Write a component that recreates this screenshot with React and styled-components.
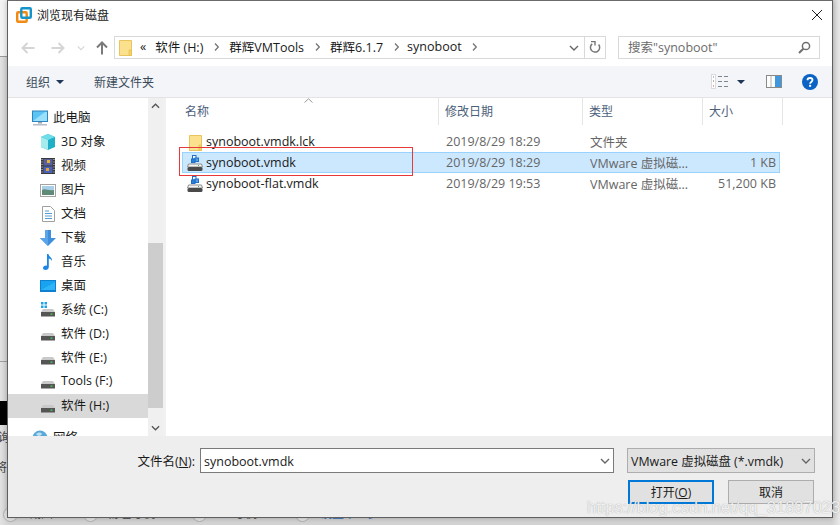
import React from "react";
import styled, { createGlobalStyle } from "styled-components";

const GlobalStyle = createGlobalStyle`
  html, body {
    margin: 0;
    padding: 0;
    width: 840px;
    height: 525px;
    overflow: hidden;
    background: #e6e6e6;
    font-family: "Open Sans", "Noto Sans CJK SC", sans-serif;
    font-size: 12px;
    color: #1a1a1a;
  }
`;

const Desktop = styled.div`
  position: relative;
  width: 840px;
  height: 525px;
  overflow: hidden;
  background: linear-gradient(90deg, #e2e2e2 0, #d4d4d4 8px, #d4d4d4 832px, #e9e9e9 840px);
`;

const BehindLine = styled.div`
  position: absolute;
  left: 0;
  top: ${(p) => p.$top}px;
  width: 8px;
  height: ${(p) => p.$h}px;
  background: ${(p) => p.$bg};
`;

const BehindText = styled.div`
  position: absolute;
  left: ${(p) => p.$left}px;
  top: ${(p) => p.$top}px;
  white-space: nowrap;
  font-size: 12px;
  line-height: 16px;
  color: ${(p) => p.$color || "#444"};
`;

const BehindRadio = styled.div`
  position: absolute;
  left: ${(p) => p.$left}px;
  top: 507px;
  width: 13px;
  height: 13px;
  border-radius: 50%;
  border: 1px solid #b0b0b0;
  background: #e6e6e6;
`;

const Dialog = styled.div`
  position: relative;
  box-sizing: border-box;
  margin-left: 7px;
  width: 826px;
  height: 518px;
  display: flex;
  flex-direction: column;
  background: #fff;
  border: 1px solid #5f5f5f;
  border-top-color: #6a6a6a;
  box-shadow: 0 0 6px rgba(0, 0, 0, 0.25);
`;

const TitleBar = styled.div`
  height: 29px;
  box-sizing: border-box;
  display: flex;
  align-items: center;
  padding: 0 9px 1px 8px;
  flex-shrink: 0;
`;

const TitleText = styled.span`
  margin-left: 5px;
  font-size: 12px;
  flex: 1;
`;

const NavBar = styled.div`
  height: 36px;
  display: flex;
  align-items: center;
  flex-shrink: 0;
  padding-bottom: 1px;
  box-sizing: border-box;
`;

const NavButtons = styled.div`
  width: 106px;
  display: flex;
  align-items: center;
  padding-left: 13px;
  box-sizing: border-box;
`;

const NavSlot = styled.span`
  display: flex;
  width: ${(p) => p.$w}px;
`;

const AddressBox = styled.div`
  box-sizing: border-box;
  width: 492px;
  height: 23px;
  border: 1px solid #d9d9d9;
  display: flex;
  align-items: center;
  padding-left: 4px;
`;

const Crumbs = styled.div`
  flex: 1;
  display: flex;
  align-items: center;
  font-size: 12.5px;
`;

const Crumb = styled.span`
  display: flex;
  align-items: center;
  margin-left: ${(p) => p.$ml}px;
  margin-bottom: 2px;
`;

const AddressEnd = styled.div`
  width: 20px;
  height: 100%;
  display: flex;
  align-items: center;
  justify-content: center;
`;

const AddressRefresh = styled(AddressEnd)`
  border-left: 1px solid #d9d9d9;
`;

const SearchBox = styled.div`
  box-sizing: border-box;
  margin-left: 12px;
  width: 202px;
  height: 23px;
  border: 1px solid #d9d9d9;
  display: flex;
  align-items: center;
  justify-content: space-between;
  padding: 0 8px 0 9px;
  color: #6d6d6d;
  font-size: 12.5px;
`;

const SearchHint = styled.span`
  margin-bottom: 2px;
`;

const Toolbar = styled.div`
  height: 32px;
  box-sizing: border-box;
  flex-shrink: 0;
  display: flex;
  align-items: center;
  padding: 0 14px 0 18px;
  background: #f3f5f8;
  border-bottom: 1px solid #e3e3e3;
  color: #3a4a5a;
  white-space: nowrap;
`;

const ToolItem = styled.span`
  display: flex;
  align-items: center;
  margin-right: ${(p) => p.$mr || 0}px;
  margin-left: ${(p) => p.$ml || 0}px;
`;

const ToolGroup = styled.div`
  margin-left: auto;
  display: flex;
  align-items: center;
`;

const Triangle = styled.i`
  display: block;
  width: 0;
  height: 0;
  margin-left: ${(p) => p.$ml}px;
  border-left: 4px solid transparent;
  border-right: 4px solid transparent;
  border-top: 4px solid #1f3656;
`;

const Body = styled.div`
  flex: 1;
  min-height: 0;
  display: flex;
  background: #fff;
`;

const Sidebar = styled.div`
  width: 140px;
  flex-shrink: 0;
  overflow: hidden;
  padding-top: 8px;
  box-sizing: border-box;
`;

const NavRow = styled.div`
  height: 24px;
  display: flex;
  align-items: center;
  margin-top: ${(p) => (p.$gap ? 8 : 0)}px;
  padding-left: ${(p) => (p.$root ? 24 : 32)}px;
  background: ${(p) => (p.$active ? "#d9d9d9" : "transparent")};
  font-size: 12.5px;
`;

const IconSlot = styled.span`
  width: 16px;
  height: 16px;
  margin-right: ${(p) => p.$mr}px;
  flex-shrink: 0;
  display: flex;
  align-items: center;
  justify-content: center;
`;

const NavLabel = styled.span`
  margin-bottom: 4px;
`;

const Scrollbar = styled.div`
  width: 15px;
  flex-shrink: 0;
  background: #f0f0f0;
  display: flex;
  flex-direction: column;
`;

const ScrollArrow = styled.div`
  height: 17px;
  display: flex;
  align-items: center;
  justify-content: center;
  transform: ${(p) => (p.$up ? "rotate(180deg)" : "none")};
`;

const ScrollTrack = styled.div`
  flex: 1;
  padding-top: 128px;
  padding-bottom: 11px;
  display: flex;
`;

const ScrollThumb = styled.div`
  flex: 1;
  background: #cdcdcd;
`;

const ListPane = styled.div`
  flex: 1;
  border-left: 3px solid #f1f1f1;
  min-width: 0;
`;

const HeaderRow = styled.div`
  position: relative;
  display: grid;
  grid-template-columns: 273px 144px 120px 80px;
  height: 27px;
  color: #4c607a;
`;

const HeaderCell = styled.div`
  display: flex;
  align-items: center;
  padding-left: ${(p) => p.$pl}px;
  padding-bottom: 1px;
  box-sizing: border-box;
  border-right: 1px solid #e5e5e5;
  font-size: 12px;
`;

const SortCaret = styled.svg`
  position: absolute;
  left: 138px;
  top: 0;
`;

const FileList = styled.div`
  padding: 6px 0 0 16px;
`;

const FileRow = styled.div`
  position: relative;
  box-sizing: border-box;
  display: grid;
  grid-template-columns: 257px 144px 120px 72px;
  width: 598px;
  height: 21px;
  align-items: center;
  color: #666;
  font-size: 12.5px;
  background: ${(p) => (p.$selected ? "#cce8ff" : "transparent")};
  border: 1px solid ${(p) => (p.$selected ? "#99d1ff" : "transparent")};
`;

const NameCell = styled.div`
  display: flex;
  align-items: center;
  padding-left: 4px;
  color: #1a1a1a;
`;

const CellText = styled.span`
  display: block;
  margin-bottom: 2px;
`;

const Cell = styled.div`
  padding-left: 6px;
  white-space: nowrap;
`;

const SizeCell = styled.div`
  text-align: right;
  white-space: nowrap;
`;

const RedMark = styled.div`
  position: absolute;
  left: -4px;
  top: -6px;
  width: 232px;
  height: 27px;
  border: 1px solid #e8393a;
  pointer-events: none;
`;

const Footer = styled.div`
  height: 81px;
  box-sizing: border-box;
  flex-shrink: 0;
  background: #eeeeee;
  padding: 12px 17px 0 0;
  display: flex;
  flex-direction: column;
`;

const NameRow = styled.div`
  display: flex;
  justify-content: flex-end;
  align-items: center;
`;

const FieldLabel = styled.label`
  margin-right: 5px;
  font-size: 12.5px;
`;

const FileInput = styled.div`
  box-sizing: border-box;
  width: 414px;
  height: 25px;
  border: 1px solid #7a7a7a;
  background: #fff;
  display: flex;
  align-items: center;
  justify-content: space-between;
  padding: 1px 3px 0 3px;
  font-size: 12.5px;
`;

const TypeSelect = styled.div`
  box-sizing: border-box;
  margin-left: 13px;
  width: 188px;
  height: 25px;
  border: 1px solid #adadad;
  background: #e1e1e1;
  display: flex;
  align-items: center;
  justify-content: space-between;
  padding: 0 3px 0 3px;
  font-size: 12.4px;
`;

const ButtonRow = styled.div`
  display: flex;
  justify-content: flex-end;
  margin-top: 7px;
  padding-right: 1px;
`;

const DialogButton = styled.div`
  box-sizing: border-box;
  width: 86px;
  height: 24px;
  margin-left: 14px;
  display: flex;
  align-items: center;
  justify-content: center;
  background: #e1e1e1;
  border: ${(p) => (p.$primary ? "2px solid #0078d7" : "1px solid #adadad")};
  font-size: 12px;
`;

const Watermark = styled.div`
  position: absolute;
  left: 579px;
  top: 496px;
  font-family: "Liberation Sans", sans-serif;
  font-size: 16.5px;
  line-height: 20px;
  white-space: nowrap;
  color: rgba(255, 255, 255, 0.85);
  text-shadow: 0 0 1px rgba(140, 140, 140, 0.9);
  pointer-events: none;
`;

const AppLogo = () => (
  <svg width="16" height="16" viewBox="0 0 16 16">
    <rect x="1.200" y="5.200" width="9.500" height="9.500" rx="1" fill="none" stroke="#f08a13" strokeWidth="2.400" />
    <rect x="5.300" y="1.200" width="9.500" height="9.500" rx="1" fill="none" stroke="#1594c9" strokeWidth="2.400" />
  </svg>
);

const CloseIcon = () => (
  <svg width="12" height="12" viewBox="0 0 12 12">
    <path d="M1 1l10 10M11 1L1 11" stroke="#222" strokeWidth="1" fill="none" />
  </svg>
);

const Arrow = ({ dir, color }) => {
  const rotate = { left: 0, right: 180, up: 90 }[dir];
  return (
    <svg width="14" height="14" viewBox="0 0 14 14" style={{ transform: `rotate(${rotate}deg)` }}>
      <path d="M1.500 7h12M6.500 2L1.500 7l5 5" stroke={color} strokeWidth="2" fill="none" />
    </svg>
  );
};

const Chevron = ({ color = "#666", w = 10 }) => (
  <svg width={w} height="6" viewBox="0 0 10 6">
    <path d="M1 1l4 4 4-4" stroke={color} strokeWidth="1.400" fill="none" />
  </svg>
);

const CrumbArrow = () => (
  <svg width="5" height="8" viewBox="0 0 5 8">
    <path d="M1 .5L4.300 4 1 7.500" stroke="#777" strokeWidth="1.300" fill="none" />
  </svg>
);

const FolderIcon = ({ w = 13, h = 16 }) => (
  <svg width={w} height={h} viewBox="0 0 13 16">
    <path d="M.5.5h12v15H.5z" fill="#fbe08e" stroke="#e9c45c" />
    <path d="M10 10h2.500v5.500H10z" fill="#f6d264" stroke="#e2bb50" strokeWidth=".6" />
  </svg>
);

const RefreshIcon = () => (
  <svg width="12" height="13" viewBox="0 0 12 13">
    <path d="M9.600 3.600A4.600 4.600 0 1 1 3.200 2.900" stroke="#777" strokeWidth="1.500" fill="none" />
    <path d="M2 .5h4v4" stroke="#777" strokeWidth="1.400" fill="none" />
  </svg>
);

const SearchIcon = () => (
  <svg width="13" height="13" viewBox="0 0 13 13">
    <circle cx="8" cy="5" r="3.600" stroke="#6e6e6e" strokeWidth="1.500" fill="none" />
    <path d="M5.300 7.800L1 12" stroke="#6e6e6e" strokeWidth="2" />
  </svg>
);

const ViewIcon = () => (
  <svg width="17" height="15" viewBox="0 0 17 15">
    <rect x=".5" y=".5" width="4" height="14" fill="#fff" stroke="#bcbcbc" strokeDasharray="1 1" />
    <path d="M2 3h1" stroke="#5a86c0" />
    <path d="M2 7h1" stroke="#6a6a6a" />
    <path d="M2 12h1" stroke="#d84b4b" />
    <path d="M7 2.500h4M13 2.500h4M7 7.500h4M13 7.500h4M7 12.500h4M13 12.500h4" stroke="#7d8794" />
  </svg>
);

const PaneIcon = () => (
  <svg width="16" height="13" viewBox="0 0 16 13">
    <rect x=".5" y=".5" width="15" height="12" fill="#fff" stroke="#8a8a8a" />
    <rect x="9" y="1" width="6" height="11" fill="#3f97e0" />
    <path d="M5 1v11" stroke="#b0b0b0" />
  </svg>
);

const HelpIcon = () => (
  <svg width="16" height="16" viewBox="0 0 16 16">
    <circle cx="8" cy="8" r="8" fill="#0a63c4" />
    <path d="M5.500 6.200C5.500 4.700 6.600 4 8 4s2.500.8 2.500 2.100c0 1.900-2.400 1.800-2.400 3.700" stroke="#fff" strokeWidth="1.800" fill="none" />
    <rect x="7.100" y="10.800" width="2" height="2" fill="#fff" />
  </svg>
);

const PcIcon = () => (
  <svg width="16" height="16" viewBox="0 0 16 16">
    <rect x=".5" y="1" width="15" height="10.500" fill="#5cc4f5" stroke="#2e86c1" />
    <path d="M1 11L13 2h2v9z" fill="#9be0fb" />
    <rect x="6" y="12" width="4" height="1.500" fill="#9aa6b0" />
    <rect x="1" y="14" width="14" height="1.500" fill="#b5bec6" />
  </svg>
);

const CubeIcon = () => (
  <svg width="16" height="16" viewBox="0 0 16 16">
    <path d="M8 0l7 3v10l-7 3-7-3V3z" fill="#1fb0c8" />
    <path d="M8 0l7 3-7 3-7-3z" fill="#6fdde8" />
    <path d="M1 3l7 3v10l-7-3z" fill="#a5ecef" />
  </svg>
);

const FilmIcon = () => (
  <svg width="16" height="16" viewBox="0 0 16 16">
    <rect x="1" y="0" width="14" height="16" fill="#3a3a3a" />
    <rect x="3.500" y="1" width="9" height="6.500" fill="#5a5f9e" />
    <rect x="3.500" y="8.500" width="9" height="6.500" fill="#4a62b8" />
    <rect x="7" y="2" width="3" height="3" fill="#e2b23a" />
    <rect x="6" y="10" width="3" height="3" fill="#e2a03a" />
    <path d="M2 1v14M14 1v14" stroke="#ddd" strokeWidth="1" strokeDasharray="1 1.500" />
  </svg>
);

const PictureIcon = () => (
  <svg width="16" height="13" viewBox="0 0 16 13">
    <rect x=".5" y=".5" width="15" height="12" fill="#fff" stroke="#a3a3a3" />
    <rect x="2" y="2" width="12" height="5" fill="#a9cfe8" />
    <path d="M2 6c3-2 6 1 12 0v5H2z" fill="#5f8a78" />
  </svg>
);

const DocIcon = () => (
  <svg width="13" height="16" viewBox="0 0 13 16">
    <path d="M.5.500h8l4 4v11H.5z" fill="#fff" stroke="#a0a0a0" />
    <path d="M3 5h4M3 7.500h7M3 10h7M3 12.500h7" stroke="#5a9bd0" />
  </svg>
);

const DownIcon = () => (
  <svg width="16" height="16" viewBox="0 0 16 16">
    <path d="M5 0h6v8h5l-8 8-8-8h5z" fill="#3d8fdc" />
    <path d="M5 0h3v16L0 8h5z" fill="#5aa5e8" />
  </svg>
);

const NoteIcon = () => (
  <svg width="16" height="16" viewBox="0 0 16 16">
    <path d="M7 0h1.500c.3 3 4 3.500 3.500 7-.8-1.800-2-2.500-3.200-2.600V13c0 1.700-1.500 3-3.300 3C4 16 3 15.200 3 14c0-1.400 1.500-2.400 3-2.400.4 0 .7 0 1 .1z" fill="#1c86e2" />
  </svg>
);

const DesktopIcon = () => (
  <svg width="16" height="12" viewBox="0 0 16 12">
    <rect width="16" height="12" fill="#0f7fd0" />
    <rect x="1" y="1" width="14" height="9" fill="#18a3f0" />
    <path d="M1 10L15 2v8z" fill="#2eb4f7" />
  </svg>
);

const DriveIcon = ({ windows }) => (
  <svg width="16" height="16" viewBox="0 0 16 16">
    {windows && (
      <g fill="#21a1e8">
        <rect x="1" y="0" width="2.500" height="2.500" />
        <rect x="4.500" y="0" width="2.500" height="2.500" />
        <rect x="1" y="3.500" width="2.500" height="2.500" />
        <rect x="4.500" y="3.500" width="2.500" height="2.500" />
      </g>
    )}
    <path d="M3 7h10l2 3H1z" fill="#c9c9c9" />
    <rect x="1" y="10" width="14" height="4.500" fill="#555" />
    <rect x="10.500" y="11.500" width="2" height="1.200" fill="#3ddc4a" />
  </svg>
);

const GlobeIcon = () => (
  <svg width="16" height="16" viewBox="0 0 16 16">
    <circle cx="8" cy="8" r="7.500" fill="#5aa7d8" />
    <path d="M4 4c2-2 5-2 6 0-1 2-4 3-6 0z" fill="#b9e0f5" />
    <path d="M0 12h16" stroke="#1d7cc4" />
  </svg>
);

const DiskFileIcon = () => (
  <svg width="16" height="17" viewBox="0 0 16 17">
    <rect x="5.500" y=".5" width="3.500" height="3.500" fill="#fff" stroke="#1f6fc9" />
    <rect x="8" y="3" width="3.500" height="3.500" fill="#5aa2e6" stroke="#1f6fc9" />
    <rect x="4.500" y="4" width="3.500" height="3.500" fill="#2a7fd6" stroke="#1f6fc9" />
    <path d="M1.500 9h13l1 3H.5z" fill="#f4f4f4" stroke="#8d8d8d" />
    <rect x=".5" y="12" width="15" height="4" rx="1.500" fill="#4a4a4a" />
    <path d="M11 10l1 1" stroke="#4caf50" />
  </svg>
);

const navItems = [
  { label: "此电脑", icon: <PcIcon />, root: true },
  { label: "3D 对象", icon: <CubeIcon /> },
  { label: "视频", icon: <FilmIcon /> },
  { label: "图片", icon: <PictureIcon /> },
  { label: "文档", icon: <DocIcon /> },
  { label: "下载", icon: <DownIcon /> },
  { label: "音乐", icon: <NoteIcon /> },
  { label: "桌面", icon: <DesktopIcon /> },
  { label: "系统 (C:)", icon: <DriveIcon windows /> },
  { label: "软件 (D:)", icon: <DriveIcon /> },
  { label: "软件 (E:)", icon: <DriveIcon /> },
  { label: "Tools (F:)", icon: <DriveIcon /> },
  { label: "软件 (H:)", icon: <DriveIcon />, active: true },
  { label: "网络", icon: <GlobeIcon />, root: true, gap: true },
];

const files = [
  { name: "synoboot.vmdk.lck", date: "2019/8/29 18:29", type: "文件夹", size: "", icon: <FolderIcon w={13} h={16} /> },
  { name: "synoboot.vmdk", date: "2019/8/29 18:29", type: "VMware 虚拟磁...", size: "1 KB", icon: <DiskFileIcon />, selected: true },
  { name: "synoboot-flat.vmdk", date: "2019/8/29 19:53", type: "VMware 虚拟磁...", size: "51,200 KB", icon: <DiskFileIcon /> },
];

export default function App() {
  return (
    <Desktop>
      <GlobalStyle />
      <BehindLine $top={0} $h={56} $bg="#f4f4f4" />
      <BehindLine $top={56} $h={1} $bg="#9a9a9a" />
      <BehindLine $top={361} $h={1} $bg="#a0a0a0" />
      <BehindLine $top={401} $h={24} $bg="#000" />
      <BehindText $left={-2} $top={430}>询</BehindText>
      <BehindText $left={-5} $top={460}>将</BehindText>
      <BehindRadio $left={3} />
      <BehindText $left={29} $top={506}>截图</BehindText>
      <BehindRadio $left={83} />
      <BehindText $left={107} $top={506}>物理号机</BehindText>
      <BehindRadio $left={192} />
      <BehindText $left={219} $top={506}>VT号机</BehindText>
      <BehindRadio $left={295} />
      <BehindText $left={320} $top={506} $color="#2f6fc0">设置下一步</BehindText>

      <Dialog>
        <TitleBar>
          <AppLogo />
          <TitleText>浏览现有磁盘</TitleText>
          <CloseIcon />
        </TitleBar>
        <NavBar>
          <NavButtons>
            <NavSlot $w={30}><Arrow dir="left" color="#d5d5d5" /></NavSlot>
            <NavSlot $w={26}><Arrow dir="right" color="#d5d5d5" /></NavSlot>
            <NavSlot $w={18}><Chevron color="#d5d5d5" w={8} /></NavSlot>
            <NavSlot $w={14}><Arrow dir="up" color="#7a7a7a" /></NavSlot>
          </NavButtons>
          <AddressBox>
            <Crumbs>
              <FolderIcon />
              <Crumb $ml={8}>«</Crumb>
              <Crumb $ml={9}>软件 (H:)</Crumb>
              <Crumb $ml={11}><CrumbArrow /></Crumb>
              <Crumb $ml={10}>群辉VMTools</Crumb>
              <Crumb $ml={11}><CrumbArrow /></Crumb>
              <Crumb $ml={10}>群辉6.1.7</Crumb>
              <Crumb $ml={11}><CrumbArrow /></Crumb>
              <Crumb $ml={8}>synoboot</Crumb>
              <Crumb $ml={10}><CrumbArrow /></Crumb>
            </Crumbs>
            <AddressEnd><Chevron /></AddressEnd>
            <AddressRefresh><RefreshIcon /></AddressRefresh>
          </AddressBox>
          <SearchBox>
            <SearchHint>搜索"synoboot"</SearchHint>
            <SearchIcon />
          </SearchBox>
        </NavBar>
        <Toolbar>
          <ToolItem $mr={30}>组织<Triangle $ml={6} /></ToolItem>
          <ToolItem>新建文件夹</ToolItem>
          <ToolGroup>
            <ToolItem><ViewIcon /><Triangle $ml={9} /></ToolItem>
            <ToolItem $ml={21}><PaneIcon /></ToolItem>
            <ToolItem $ml={20}><HelpIcon /></ToolItem>
          </ToolGroup>
        </Toolbar>
        <Body>
          <Sidebar>
            {navItems.map((item) => (
              <NavRow key={item.label} $root={item.root} $active={item.active} $gap={item.gap}>
                <IconSlot $mr={5}>{item.icon}</IconSlot>
                <NavLabel>{item.label}</NavLabel>
              </NavRow>
            ))}
          </Sidebar>
          <Scrollbar>
            <ScrollArrow $up>
              <Chevron color="#555" w={9} />
            </ScrollArrow>
            <ScrollTrack>
              <ScrollThumb />
            </ScrollTrack>
            <ScrollArrow>
              <Chevron color="#555" w={9} />
            </ScrollArrow>
          </Scrollbar>
          <ListPane>
            <HeaderRow>
              <SortCaret width="9" height="5" viewBox="0 0 9 5">
                <path d="M.5 4.500L4.500 .8l4 3.700" stroke="#999" fill="none" />
              </SortCaret>
              <HeaderCell $pl={19}>名称</HeaderCell>
              <HeaderCell $pl={6}>修改日期</HeaderCell>
              <HeaderCell $pl={6}>类型</HeaderCell>
              <HeaderCell $pl={6}>大小</HeaderCell>
            </HeaderRow>
            <FileList>
              {files.map((file) => (
                <FileRow key={file.name} $selected={file.selected}>
                  {file.selected && <RedMark />}
                  <NameCell>
                    <IconSlot $mr={3}>{file.icon}</IconSlot>
                    <CellText>{file.name}</CellText>
                  </NameCell>
                  <Cell><CellText>{file.date}</CellText></Cell>
                  <Cell><CellText>{file.type}</CellText></Cell>
                  <SizeCell><CellText>{file.size}</CellText></SizeCell>
                </FileRow>
              ))}
            </FileList>
          </ListPane>
        </Body>
        <Footer>
          <NameRow>
            <FieldLabel>文件名(<u>N</u>):</FieldLabel>
            <FileInput>
              <span>synoboot.vmdk</span>
              <Chevron color="#666" />
            </FileInput>
            <TypeSelect>
              <span>VMware 虚拟磁盘 (*.vmdk)</span>
              <Chevron color="#666" />
            </TypeSelect>
          </NameRow>
          <ButtonRow>
            <DialogButton $primary>打开(<u>O</u>)</DialogButton>
            <DialogButton>取消</DialogButton>
          </ButtonRow>
        </Footer>
        <Watermark>https://blog.csdn.net/qq_31897023</Watermark>
      </Dialog>
    </Desktop>
  );
}
